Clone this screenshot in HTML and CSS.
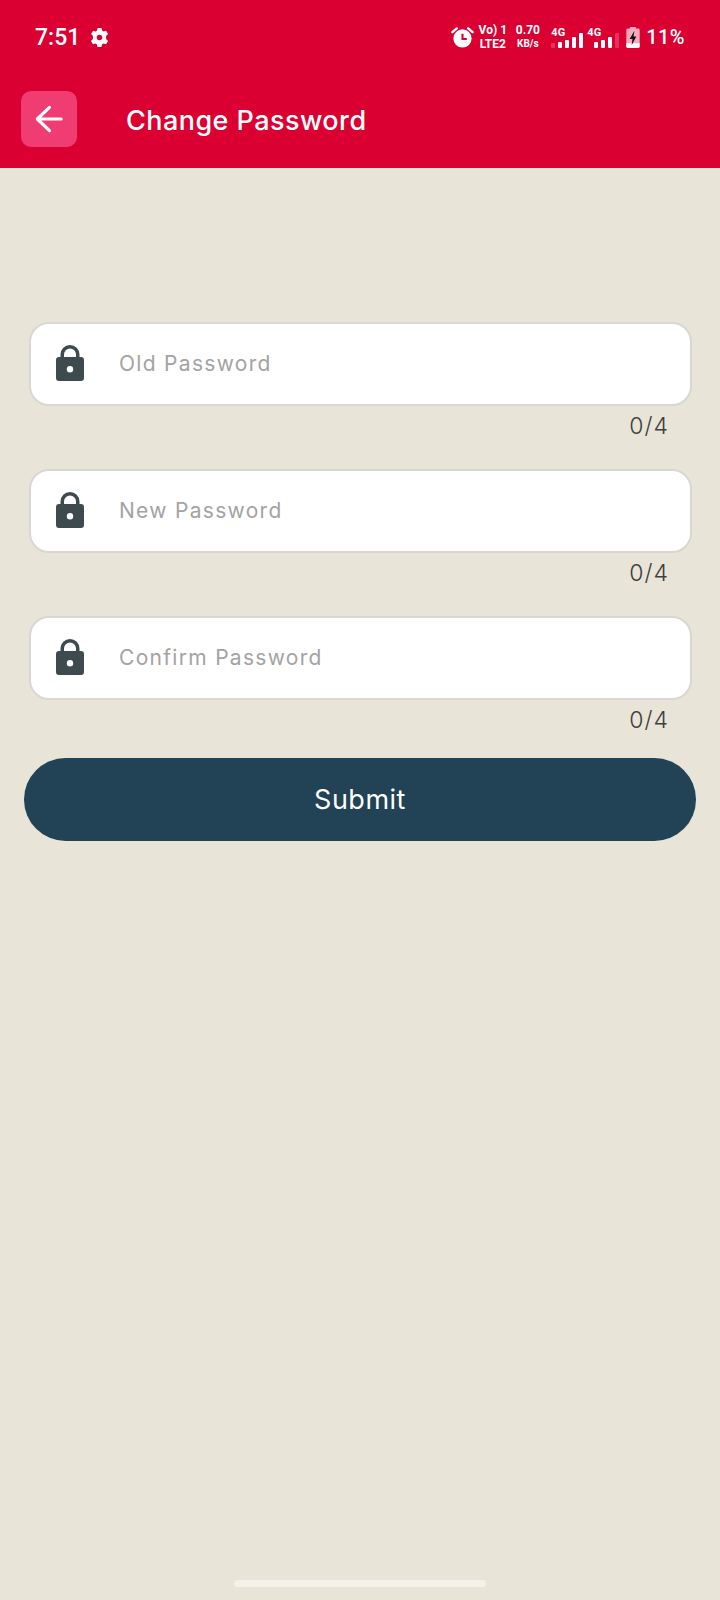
FILE: index.html
```html
<!DOCTYPE html>
<html lang="en">
<head>
    <meta charset="UTF-8">
    <meta name="viewport" content="width=device-width, initial-scale=1.0">
    <title>Change Password</title>
    <link rel="stylesheet" href="styles.css">
</head>
<body>

    <!-- Red header with status bar and title -->
    <div class="header">
        <div class="status-bar">
            <div class="status-left">
                <span class="time">7:51</span>
                <svg class="gear" viewBox="0 0 24 24" width="19" height="19">
                    <path fill="#fff" fill-rule="evenodd" d="M9.500 0h5l.7 3.300 1.900 1.100 3.200-1 2.500 4.300-2.500 2.300v4l2.500 2.300-2.500 4.300-3.200-1-1.900 1.100-.7 3.300h-5l-.7-3.300-1.900-1.100-3.200 1-2.500-4.300 2.500-2.300v-4L1.400 7.700l2.500-4.300 3.200 1 1.900-1.100zM12 8.500a3.500 3.500 0 1 0 0 7 3.500 3.500 0 0 0 0-7z"/>
                </svg>
            </div>
            <div class="status-right">
                <svg class="alarm" viewBox="0 0 24 24" width="23" height="23">
                    <circle cx="12" cy="13" r="9.500" fill="#fff"/>
                    <path d="M12 8v5.500h4.500" fill="none" stroke="#da0032" stroke-width="2.200"/>
                    <path d="M1.500 6.500 6 2.500M22.500 6.500 18 2.500" fill="none" stroke="#fff" stroke-width="2.500" stroke-linecap="round"/>
                </svg>
                <div class="net-label volte"><span>Vo) 1</span><span>LTE2</span></div>
                <div class="net-label speed"><span class="speed-num">0.70</span><span class="speed-unit">KB/s</span></div>
                <div class="signal signal-first">
                    <span class="signal-tag">4G</span>
                    <div class="bars">
                        <i class="bar dim b1"></i><i class="bar b2"></i><i class="bar b3"></i><i class="bar b4"></i><i class="bar b5"></i>
                    </div>
                </div>
                <div class="signal">
                    <span class="signal-tag">4G</span>
                    <div class="bars">
                        <i class="bar b2"></i><i class="bar b3"></i><i class="bar b4"></i><i class="bar dim b5"></i>
                    </div>
                </div>
                <svg class="battery" viewBox="0 0 14 22" width="14" height="21">
                    <path fill="#f7a9bd" d="M4 0h6v1.500h2.500a1.500 1.500 0 0 1 1.500 1.500v17.500a1.500 1.500 0 0 1-1.500 1.500h-11A1.500 1.500 0 0 1 0 20.500V3a1.500 1.500 0 0 1 1.500-1.500H4z"/>
                    <path fill="#fff" d="M0 17h14v3.500a1.500 1.500 0 0 1-1.500 1.500h-11A1.500 1.500 0 0 1 0 20.500z"/>
                    <path fill="#111" d="M8.500 4 3.500 12.500h3L5.500 19l5-9h-3z"/>
                </svg>
                <span class="battery-pct">11%</span>
            </div>
        </div>
        <div class="toolbar">
            <div class="back-btn">
                <svg viewBox="0 0 30 30" width="28" height="28">
                    <path d="M28 15H2.500M15.500 2.500 2.500 15l13 12.500" fill="none" stroke="#fff" stroke-width="3.400" stroke-linecap="round" stroke-linejoin="round"/>
                </svg>
            </div>
            <div class="page-title">Change Password</div>
        </div>
    </div>

    <!-- Password form -->
    <div class="form">
        <div class="field">
            <div class="input-box">
                <svg class="lock" viewBox="0 0 28 36" width="28" height="36">
                    <path class="lock-shape" fill-rule="evenodd" d="M3 12h1.500V9.500a9.500 9.500 0 0 1 19 0V12H25a3 3 0 0 1 3 3v18a3 3 0 0 1-3 3H3a3 3 0 0 1-3-3V15a3 3 0 0 1 3-3zM8 12h12V9.500a6 6 0 0 0-12 0zM14 21a3.200 3.200 0 1 0 0 6.400 3.200 3.200 0 0 0 0-6.400z"/>
                </svg>
                <span class="placeholder">Old Password</span>
            </div>
            <div class="counter">0/4</div>
        </div>
        <div class="field">
            <div class="input-box">
                <svg class="lock" viewBox="0 0 28 36" width="28" height="36">
                    <path class="lock-shape" fill-rule="evenodd" d="M3 12h1.500V9.500a9.500 9.500 0 0 1 19 0V12H25a3 3 0 0 1 3 3v18a3 3 0 0 1-3 3H3a3 3 0 0 1-3-3V15a3 3 0 0 1 3-3zM8 12h12V9.500a6 6 0 0 0-12 0zM14 21a3.200 3.200 0 1 0 0 6.400 3.200 3.200 0 0 0 0-6.400z"/>
                </svg>
                <span class="placeholder">New Password</span>
            </div>
            <div class="counter">0/4</div>
        </div>
        <div class="field">
            <div class="input-box">
                <svg class="lock" viewBox="0 0 28 36" width="28" height="36">
                    <path class="lock-shape" fill-rule="evenodd" d="M3 12h1.500V9.500a9.500 9.500 0 0 1 19 0V12H25a3 3 0 0 1 3 3v18a3 3 0 0 1-3 3H3a3 3 0 0 1-3-3V15a3 3 0 0 1 3-3zM8 12h12V9.500a6 6 0 0 0-12 0zM14 21a3.200 3.200 0 1 0 0 6.400 3.200 3.200 0 0 0 0-6.400z"/>
                </svg>
                <span class="placeholder">Confirm Password</span>
            </div>
            <div class="counter">0/4</div>
        </div>
        <div class="submit-btn">Submit</div>
    </div>

    <!-- Gesture pill -->
    <div class="home-pill"></div>

</body>
</html>
```

FILE: styles.css
```css
/* Global styling */
* {
    box-sizing: border-box;
}

body {
    margin: 0;
    width: 720px;
    height: 1600px;
    display: flex;
    flex-direction: column;
    background: #e8e4d8;
    font-family: Inter, "Liberation Sans", sans-serif;
}

/* Header */
.header {
    height: 168px;
    background-color: #da0032;
    color: #fff;
    padding-top: 20px;
}

.status-bar {
    height: 34px;
    display: flex;
    justify-content: space-between;
    align-items: center;
    padding: 0 35px;
}

.status-left {
    display: flex;
    align-items: center;
    gap: 10px;
}

.time {
    font-family: Roboto, sans-serif;
    font-size: 23px;
    font-weight: 500;
}

.status-right {
    display: flex;
    align-items: center;
}

.alarm {
    margin-right: 5px;
}

.net-label {
    display: flex;
    flex-direction: column;
    align-items: center;
    white-space: nowrap;
    font-family: Roboto, sans-serif;
    font-weight: 700;
    font-size: 11px;
    line-height: 14px;
}

.volte {
    width: 27px;
    margin-right: 10px;
    font-size: 12px;
}

.speed {
    width: 23px;
    margin-right: 12px;
}

.speed-num {
    font-size: 12px;
}

.speed-unit {
    font-size: 10px;
}

/* Signal strength blocks */
.signal {
    position: relative;
    width: 32px;
    height: 21px;
    margin-right: 6px;
    display: flex;
    align-items: flex-end;
    justify-content: flex-end;
}

.signal-first {
    margin-right: 4px;
}

.signal-tag {
    position: absolute;
    left: 0;
    top: 0;
    font-family: Roboto, sans-serif;
    font-size: 11px;
    font-weight: 700;
    line-height: 11px;
}

.bars {
    display: flex;
    align-items: flex-end;
    gap: 3px;
}

.bar {
    display: block;
    width: 4px;
    background: #fff;
    border-radius: 1px;
}

.bar.dim {
    background: #e8305c;
}

.b1 { height: 5px; }
.b2 { height: 6px; }
.b3 { height: 8px; }
.b4 { height: 11px; }
.b5 { height: 15px; }

.battery {
    margin-left: 1px;
    margin-right: 6px;
}

.battery-pct {
    font-family: Roboto, sans-serif;
    font-size: 20px;
    font-weight: 500;
    letter-spacing: 0.4px;
}

/* Title row */
.toolbar {
    display: flex;
    align-items: center;
    margin-top: 37px;
    padding-left: 21px;
}

.back-btn {
    width: 56px;
    height: 56px;
    border-radius: 10px;
    background: #ef3d73;
    display: flex;
    align-items: center;
    justify-content: center;
}

.page-title {
    margin: 2px 0 0 49px;
    font-size: 27px;
    font-weight: 500;
    letter-spacing: 0.45px;
}

/* Form */
.form {
    padding: 154px 24px 0;
}

.field {
    padding: 0 4px 0 5px;
    height: 147px;
}

.input-box {
    height: 84px;
    display: flex;
    align-items: center;
    background: #fff;
    border: 2px solid #d8d7d1;
    border-radius: 20px;
    padding: 0 0 0 25px;
}

.lock {
    margin-top: -2px;
}

.lock-shape {
    fill: #3d4b4e;
}

.placeholder {
    margin: -2px 0 0 35px;
    font-size: 21px;
    letter-spacing: 1.3px;
    color: #a3a3a3;
}

.counter {
    margin-top: 6px;
    padding-right: 23px;
    text-align: right;
    font-size: 23px;
    font-weight: 300;
    letter-spacing: 1px;
    line-height: 28px;
    color: #3f3f3d;
}

.submit-btn {
    height: 83px;
    margin-top: -5px;
    border-radius: 42px;
    background: #224255;
    color: #fff;
    font-size: 27px;
    letter-spacing: 0.5px;
    display: flex;
    align-items: center;
    justify-content: center;
}

/* Bottom gesture bar */
.home-pill {
    width: 252px;
    height: 7px;
    margin: auto auto 13px;
    border-radius: 4px;
    background: #f4f1e9;
}
```
